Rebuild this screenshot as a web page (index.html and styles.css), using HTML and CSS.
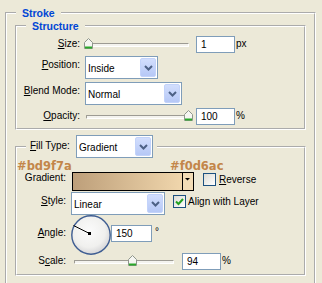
FILE: index.html
```html
<!DOCTYPE html>
<html lang="en">

<head>
  <meta charset="UTF-8">
  <meta name="viewport" content="width=device-width, initial-scale=1.0">
  <title>Stroke</title>
  <link rel="stylesheet" href="styles.css">
</head>

<body>
  <fieldset class="group stroke">
    <legend class="group-title">Stroke</legend>

    <fieldset class="group inner structure">
      <legend class="group-title">Structure</legend>

      <div class="row">
        <label class="lbl"><u>S</u>ize:</label>
        <div class="slider">
          <div class="track"></div>
          <span class="thumb" style="left: 0px">
            <svg width="9" height="11" viewBox="0 0 9 11"><path d="M.5 10.5V4.5L4.5.5l4 4v6z" fill="#f6f6f2" stroke="#8f968c"/><path d="M1 8.5h7v2H1z" fill="#2aa82a"/></svg>
          </span>
        </div>
        <span class="field">1</span>
        <span class="unit">px</span>
      </div>

      <div class="row select-row">
        <label class="lbl"><u>P</u>osition:</label>
        <div class="select select-position">
          <span class="select-value">Inside</span>
          <span class="select-btn"><svg width="9" height="6" viewBox="0 0 9 6"><path d="M1 1l3.5 3.5L8 1" fill="none" stroke="#4d6185" stroke-width="2"/></svg></span>
        </div>
      </div>

      <div class="row select-row">
        <label class="lbl"><u>B</u>lend Mode:</label>
        <div class="select select-blend">
          <span class="select-value">Normal</span>
          <span class="select-btn"><svg width="9" height="6" viewBox="0 0 9 6"><path d="M1 1l3.5 3.5L8 1" fill="none" stroke="#4d6185" stroke-width="2"/></svg></span>
        </div>
      </div>

      <div class="row">
        <label class="lbl"><u>O</u>pacity:</label>
        <div class="slider">
          <div class="track"></div>
          <span class="thumb" style="left: 100px">
            <svg width="9" height="11" viewBox="0 0 9 11"><path d="M.5 10.5V4.5L4.5.5l4 4v6z" fill="#f6f6f2" stroke="#8f968c"/><path d="M1 8.5h7v2H1z" fill="#2aa82a"/></svg>
          </span>
        </div>
        <span class="field">100</span>
        <span class="unit">%</span>
      </div>
    </fieldset>

    <fieldset class="group inner fill">
      <legend class="fill-legend">
        <label class="legend-lbl"><u>F</u>ill Type:</label>
        <div class="select select-filltype">
          <span class="select-value">Gradient</span>
          <span class="select-btn"><svg width="9" height="6" viewBox="0 0 9 6"><path d="M1 1l3.5 3.5L8 1" fill="none" stroke="#4d6185" stroke-width="2"/></svg></span>
        </div>
      </legend>

      <div class="swatch-notes">
        <span>#bd9f7a</span>
        <span>#f0d6ac</span>
      </div>

      <div class="row gradient-row">
        <label class="lbl">Gradient:</label>
        <div class="gradient">
          <span class="gradient-fill"></span>
          <span class="gradient-btn"><svg width="10" height="17" viewBox="0 0 10 17"><path d="M2 5h5L4.5 7.5z" fill="#000"/></svg></span>
        </div>
        <label class="check-label reverse">
          <span class="check"></span>
          <span><u>R</u>everse</span>
        </label>
      </div>

      <div class="row select-row style-row">
        <label class="lbl"><u>S</u>tyle:</label>
        <div class="select select-style">
          <span class="select-value">Linear</span>
          <span class="select-btn"><svg width="9" height="6" viewBox="0 0 9 6"><path d="M1 1l3.5 3.5L8 1" fill="none" stroke="#4d6185" stroke-width="2"/></svg></span>
        </div>
        <label class="check-label align">
          <span class="check"><svg width="11" height="11" viewBox="0 0 11 11"><path d="M2 5.5l2.5 2.5L9 3" fill="none" stroke="#21a121" stroke-width="2"/></svg></span>
          <span>Align with Layer</span>
        </label>
      </div>

      <div class="row angle-row">
        <label class="lbl"><u>A</u>ngle:</label>
        <svg class="dial" width="40" height="40" viewBox="0 0 40 40">
          <defs>
            <radialGradient id="dialFill" cx="45%" cy="40%" r="60%">
              <stop offset="0" stop-color="#fbfbfb"/>
              <stop offset="0.7" stop-color="#f0f0ee"/>
              <stop offset="1" stop-color="#d6d6d8"/>
            </radialGradient>
          </defs>
          <circle cx="20" cy="20" r="19.2" fill="url(#dialFill)" stroke="#3e5d92" stroke-width="1.4"/>
          <line x1="18.5" y1="18.5" x2="2.5" y2="10.5" stroke="#000" stroke-width="1"/>
          <rect x="17" y="17" width="3" height="3" fill="#000"/>
        </svg>
        <span class="field angle-field">150</span>
        <span class="unit degree">°</span>
      </div>

      <div class="row">
        <label class="lbl">S<u>c</u>ale:</label>
        <div class="slider scale-slider">
          <div class="track"></div>
          <span class="thumb" style="left: 56px">
            <svg width="9" height="11" viewBox="0 0 9 11"><path d="M.5 10.5V4.5L4.5.5l4 4v6z" fill="#f6f6f2" stroke="#8f968c"/><path d="M1 8.5h7v2H1z" fill="#2aa82a"/></svg>
          </span>
        </div>
        <span class="field scale-field">94</span>
        <span class="unit">%</span>
      </div>
    </fieldset>
  </fieldset>
</body>

</html>
```

FILE: styles.css
```css
* {
  margin: 0;
  padding: 0;
  box-sizing: border-box;
}

html,
body {
  overflow: hidden;
}

body {
  background: #ece9d8;
  font-family: "Liberation Sans", Arial, sans-serif;
  font-size: 10px;
  color: #000;
}

.group {
  border: 2px groove #fff;
  min-width: 0;
}

.group-title {
  margin-left: 9px;
  padding: 0 6px;
  font-size: 10.5px;
  font-weight: bold;
  line-height: 14px;
  color: #0046d5;
}

.stroke {
  width: 311px;
  margin: 6px 0 0 5px;
  padding: 0 0 12px;
}

.inner {
  margin: 0 8px;
}

.structure {
  margin-top: -1px;
  padding: 0 0 3px;
}

.fill {
  margin-top: 5px;
  padding: 0 0 4px;
}

.row {
  display: flex;
  align-items: flex-start;
}

.structure .row {
  margin-top: 3px;
}

.lbl {
  flex: none;
  width: 63px;
  margin-right: 5px;
  padding-top: 2px;
  line-height: 12px;
  text-align: right;
}

.fill .lbl {
  width: 49px;
}

.select-row .lbl {
  padding-top: 3px;
}

/* slider */
.slider {
  position: relative;
  flex: none;
  width: 110px;
  height: 17px;
  margin-left: -1px;
}

.track {
  height: 4px;
  margin: 7px 5px 0 2px;
  background: #f4f3ee;
  border: 1px solid;
  border-color: #9d9b93 #fff #fff #9d9b93;
  border-radius: 1px;
}

.thumb {
  position: absolute;
  top: 2px;
  width: 9px;
  height: 11px;
}

.thumb svg {
  display: block;
}

.scale-slider {
  width: 107px;
  margin-left: 1px;
}

/* text fields */
.field {
  flex: none;
  width: 39px;
  height: 17px;
  margin-left: 2px;
  padding-left: 4px;
  line-height: 15px;
  background: #fff;
  border: 1px solid #7f9db9;
}

.scale-field {
  margin-left: 3px;
}

.angle-field {
  width: 41px;
  margin: 10px 0 0;
}

.unit {
  margin-left: 1px;
  padding-top: 2px;
  line-height: 12px;
}

.degree {
  margin-left: 3px;
  padding-top: 11px;
}

/* combo boxes */
.select {
  flex: none;
  display: flex;
  height: 23px;
  background: #fff;
  border: 1px solid #7f9db9;
}

.select-value {
  flex: 1;
  padding: 2px 0 0 2px;
  line-height: 19px;
}

.select-btn {
  width: 16px;
  margin: 1px;
  display: flex;
  align-items: center;
  justify-content: center;
  background: linear-gradient(#d2defd, #b6c8f6);
  border: 1px solid #c3d3fa;
  border-radius: 2px;
}

.select-btn svg {
  display: block;
}

.select-position {
  width: 73px;
}

.select-blend {
  width: 97px;
}

.select-filltype {
  width: 77px;
}

.select-style {
  width: 94px;
}

/* fill type section */
.fill-legend {
  display: flex;
  margin-left: 9px;
  padding: 0 4px;
}

.legend-lbl {
  width: 42px;
  margin-right: 4px;
  padding-top: 5px;
  line-height: 12px;
}

.swatch-notes {
  display: grid;
  grid-template-columns: 153px auto;
  height: 11px;
  margin-top: 3px;
  font-family: "DejaVu Sans", sans-serif;
  font-size: 11.5px;
  font-weight: bold;
  line-height: 11px;
  color: #c3864a;
}

.gradient-row .lbl {
  padding-top: 0;
}

.gradient {
  flex: none;
  display: flex;
  width: 122px;
  height: 19px;
  margin-left: 1px;
  border: 1px solid #000;
}

.gradient-fill {
  flex: 1;
  background: linear-gradient(to right, #bd9f7a, #f0d6ac);
}

.gradient-btn {
  width: 11px;
  background: #f2dcb6;
  border-left: 1px solid #000;
}

.gradient-btn svg {
  display: block;
}

.check-label {
  display: flex;
  align-items: center;
  gap: 3px;
}

.check {
  flex: none;
  width: 13px;
  height: 13px;
  background: linear-gradient(135deg, #dcdcd5, #fff);
  border: 1px solid #1c5180;
}

.check svg {
  display: block;
}

.reverse {
  margin: 1px 0 0 9px;
}

.style-row {
  margin-top: 1px;
}

.align {
  gap: 2px;
  margin: 3px 0 0 8px;
}

.angle-row {
  height: 38px;
}

.angle-row .lbl {
  padding-top: 12px;
}

.dial {
  flex: none;
  display: block;
}
```
